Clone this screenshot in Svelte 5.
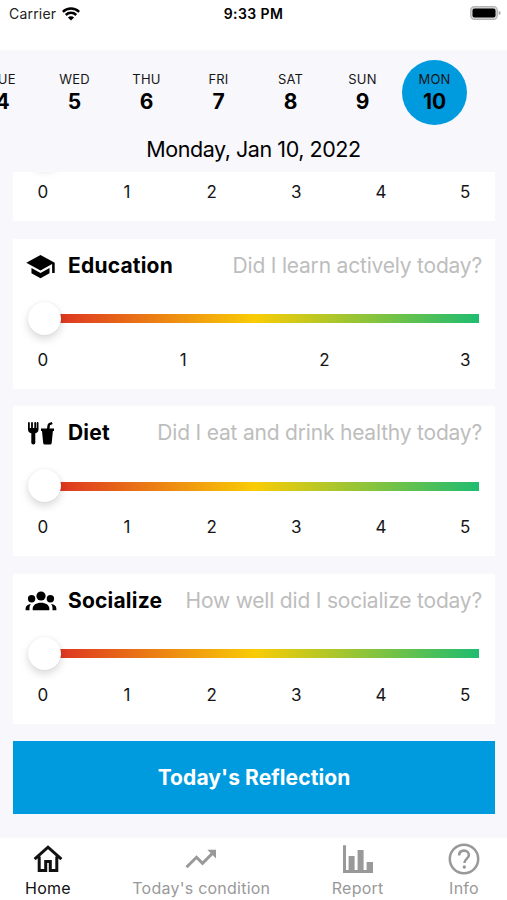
<script lang="ts">
	type Category = {
		name: string;
		icon: string;
		prompt: string;
		max: number;
	};

	const days = [
		{ label: 'TUE', date: 4 },
		{ label: 'WED', date: 5 },
		{ label: 'THU', date: 6 },
		{ label: 'FRI', date: 7 },
		{ label: 'SAT', date: 8 },
		{ label: 'SUN', date: 9 },
		{ label: 'MON', date: 10 }
	];

	const categories: Category[] = [
		{ name: '', icon: '', prompt: '', max: 5 },
		{ name: 'Education', icon: 'school', prompt: 'Did I learn actively today?', max: 3 },
		{ name: 'Diet', icon: 'food', prompt: 'Did I eat and drink healthy today?', max: 5 },
		{ name: 'Socialize', icon: 'group', prompt: 'How well did I socialize today?', max: 5 }
	];

	const tabs = [
		{ id: 'home', label: 'Home' },
		{ id: 'trend', label: "Today's condition" },
		{ id: 'report', label: 'Report' },
		{ id: 'info', label: 'Info' }
	];

	let selected = $state(10);
	let activeTab = $state('home');
</script>

<div class="screen">
	<header class="status">
		<div class="carrier">
			<span>Carrier</span>
			<svg width="18" height="14" viewBox="0 0 18 14" fill="none" stroke="#000" stroke-width="2.5">
				<path d="M.8 4.9a11.6 11.6 0 0 1 16.4 0" />
				<path d="M3.8 8a7.4 7.4 0 0 1 10.4 0" />
				<path d="M9 13.6 5.9 10.5a4.4 4.4 0 0 1 6.2 0z" fill="#000" stroke="none" />
			</svg>
		</div>
		<span class="time">9:33 PM</span>
		<svg class="battery" width="31" height="14" viewBox="0 0 31 14">
			<rect x=".7" y=".7" width="26.6" height="12.6" rx="3.6" fill="#d6d6d6" stroke="#b4b4b4" stroke-width="1.2" />
			<rect x="2.5" y="2.5" width="23" height="9" rx="2" />
			<path d="M28.7 4.8q2 .8 2 2.2t-2 2.2z" fill="#a9a9a9" />
		</svg>
	</header>

	<nav class="days">
		{#each days as day}
			<button class="day" class:selected={selected === day.date} onclick={() => (selected = day.date)}>
				<span class="weekday">{day.label}</span>
				<span class="date">{day.date}</span>
			</button>
		{/each}
	</nav>
	<h1>Monday, Jan 10, 2022</h1>

	<main>
		{#each categories as category}
			<section class="card">
				<div class="heading">
					<span class="icon">
						{#if category.icon === 'school'}
							<svg width="31" height="31" viewBox="0 0 24 24">
								<path d="M5 13.18v4L12 21l7-3.82v-4L12 17l-7-3.82zM12 3 1 9l11 6 9-4.91V17h2V9L12 3z" />
							</svg>
						{:else if category.icon === 'food'}
							<svg width="28" height="26" viewBox="0 0 28 26">
								<path d="M1 2.1q0-1.1.9-1.1t.9 1.1v5h1.3v-5Q4.1 1 5 1t.9 1.1v5h1.4v-5Q7.3 1 8.2 1t.9 1.1v5h.6v-5Q9.7 1 10.6 1t.9 1.1v6.4q0 3-3.2 3.8v9.4q0 1.800-2 1.800t-2-1.800v-9.400Q1 11.500 1 8.500z" />
								<path d="M14 7.400h6l.6-3.600q.3-1.300 1.500-1.700l2.600-1.100 1 2.100-2.700 1.200-.5 3.100H27v2.700h-1.100L24.700 22q-.2 1.500-1.600 1.500h-5.300q-1.400 0-1.600-1.500L15 10.100h-1z" />
							</svg>
						{:else if category.icon === 'group'}
							<svg width="32" height="20" viewBox="0 0 32 20">
								<circle cx="16" cy="5" r="4.6" />
								<circle cx="6.6" cy="7.7" r="3.7" />
								<circle cx="25.4" cy="7.7" r="3.7" />
								<path d="M7.700 19.200v-1.700c0-3.600 3.500-5.800 8.300-5.800s8.300 2.200 8.300 5.800v1.700z" />
								<path d="M.6 19.200v-1.500c0-2.700 2.100-4.500 5.300-4.700-1 1.200-1.400 2.500-1.400 4v2.200zM31.400 19.200v-1.500c0-2.700-2.100-4.500-5.300-4.700 1 1.200 1.400 2.500 1.400 4v2.200z" />
							</svg>
						{/if}
					</span>
					<h2>{category.name}</h2>
					<p>{category.prompt}</p>
				</div>
				<div class="slider">
					<div class="track"></div>
					<div class="thumb"></div>
				</div>
				<div class="scale">
					{#each Array(category.max + 1) as _, i}
						<span>{i}</span>
					{/each}
				</div>
			</section>
		{/each}

		<button class="reflection">Today's Reflection</button>
	</main>

	<footer>
		{#each tabs as tab}
			<button class="tab" class:active={activeTab === tab.id} onclick={() => (activeTab = tab.id)}>
				<svg width="36" height="36" viewBox="0 0 36 36" fill="none" stroke="currentColor" stroke-width="3">
					{#if tab.id === 'home'}
						<path d="M4.600 18.200 18 6.200l13.400 12M9.200 15.500v14.100h6.500v-9.100h4.600v9.100h6.500V15.500" />
					{:else if tab.id === 'trend'}
						<path d="m3.500 26.300 10-10 6 6L30.300 11.500" />
						<path d="M24.300 8.800H33v8.700z" fill="currentColor" stroke="none" />
					{:else if tab.id === 'report'}
						<path d="M4.500 4.200v26.200H33" />
						<path d="M8.600 15h6v14h-6zM17.600 9h6v20h-6zM26.600 21H33v8h-6.400z" fill="currentColor" stroke="none" />
					{:else}
						<circle cx="18" cy="18" r="14.200" stroke-width="2.500" />
						<path d="M13.100 14.500c0-3 2-4.900 4.900-4.900s4.900 2 4.900 4.600c0 3.200-4.500 3.800-4.500 7.800" stroke-width="2.600" />
						<circle cx="18.300" cy="26" r="1.700" fill="currentColor" stroke="none" />
					{/if}
				</svg>
				<span>{tab.label}</span>
			</button>
		{/each}
	</footer>
</div>

<style>
	:global(body) {
		margin: 0;
		overflow: hidden;
	}

	.screen {
		display: flex;
		flex-direction: column;
		width: 507px;
		height: 900px;
		overflow: hidden;
		background: #f7f7fc;
		color: #000;
		font-family: Inter, 'Liberation Sans', sans-serif;
	}

	button {
		padding: 0;
		border: 0;
		background: none;
		color: inherit;
		font: inherit;
	}

	h1,
	h2,
	p {
		margin: 0;
	}

	svg {
		display: block;
		flex: none;
	}

	.status {
		display: grid;
		grid-template-columns: 1fr auto 1fr;
		align-items: center;
		height: 27px;
		padding: 0 6px 23px;
		background: #fff;
		font-size: 14px;
	}

	.carrier {
		display: flex;
		align-items: center;
		gap: 6px;
		margin-left: 3px;
		color: #222;
		letter-spacing: 0.2px;
	}

	.time {
		font-weight: 600;
		letter-spacing: 0.4px;
	}

	.battery {
		justify-self: end;
		margin-top: -1px;
	}

	.days {
		display: flex;
		flex: none;
		justify-content: space-between;
		width: 497px;
		height: 65px;
		margin: 10px 0 0 -30px;
	}

	.day {
		display: flex;
		flex-direction: column;
		align-items: center;
		flex: none;
		width: 65px;
		height: 65px;
		border-radius: 50%;
	}

	.day.selected {
		background: #009bdf;
	}

	.weekday {
		margin-top: 11px;
		color: #161616;
		font-size: 13px;
		line-height: 17px;
		letter-spacing: 0.2px;
	}

	.date {
		font-size: 21px;
		font-weight: 700;
		line-height: 27px;
	}

	h1 {
		height: 47px;
		font-size: 21.5px;
		font-weight: 400;
		line-height: 48px;
		letter-spacing: -0.45px;
		text-align: center;
	}

	main {
		display: flex;
		flex: none;
		flex-direction: column;
		justify-content: flex-end;
		gap: 17.5px;
		height: 642px;
		padding: 0 12px 24px 13px;
		overflow: hidden;
	}

	.card {
		flex: none;
		box-sizing: border-box;
		height: 150px;
		padding: 11px 13px 0 12px;
		background: #fff;
	}

	.heading {
		display: flex;
		align-items: center;
		height: 31px;
	}

	.icon {
		display: flex;
		justify-content: center;
		width: 32px;
		margin: 2px 11.5px 0 -0.5px;
	}

	h2 {
		font-size: 21px;
		font-weight: 700;
		letter-spacing: 0.2px;
	}

	p {
		margin-left: auto;
		color: #bdbdbd;
		font-size: 21px;
		letter-spacing: -0.2px;
		white-space: nowrap;
	}

	.slider {
		display: flex;
		align-items: center;
		height: 33px;
		margin: 21.5px 3px 0 2.5px;
	}

	.track {
		flex: 1;
		height: 9px;
		margin-left: 16px;
		background: linear-gradient(90deg, #dc2a24, #f9cc05 48.5%, #1fbc70);
	}

	.thumb {
		order: -1;
		z-index: 1;
		width: 33px;
		height: 33px;
		margin: -1px -33px 0 0;
		border-radius: 50%;
		background: #fff;
		box-shadow: 0 4px 9px rgba(0, 0, 0, 0.15), 0 0 2px rgba(0, 0, 0, 0.08);
	}

	.scale {
		display: flex;
		justify-content: space-between;
		margin: 13.5px 12px 0 12.5px;
		color: #161616;
		font-size: 17px;
		line-height: 22px;
	}

	.scale span {
		width: 10px;
		text-align: center;
	}

	.reflection {
		flex: none;
		height: 73px;
		background: #009bdf;
		color: #fff;
		font-size: 21px;
		font-weight: 700;
		letter-spacing: 0.1px;
	}

	footer {
		display: flex;
		justify-content: space-between;
		height: 62px;
		padding: 0 25px;
		background: #fff;
	}

	.tab {
		display: flex;
		flex-direction: column;
		align-items: center;
		padding-top: 3px;
		color: #999;
		font-size: 16px;
		line-height: 22px;
		letter-spacing: 0.24px;
	}

	.tab:nth-child(3) {
		margin-right: 1px;
	}

	.tab.active {
		color: #111;
	}
</style>
